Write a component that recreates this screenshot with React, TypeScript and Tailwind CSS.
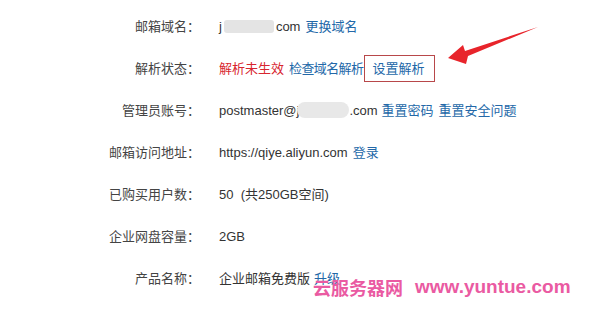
import React from "react";

const font = { fontFamily: '"Liberation Sans", "Noto Sans CJK SC", sans-serif' };

function Row({ label, children }: { label: string; children: React.ReactNode }) {
  return (
    <div className="flex h-[42px] items-center">
      <div className="w-[200px] shrink-0 text-right text-[#444]">{label}</div>
      <div className="ml-[19px] flex items-center whitespace-nowrap text-[#333]">{children}</div>
    </div>
  );
}

const Link = ({ children, className = "" }: { children: React.ReactNode; className?: string }) => (
  <span className={`text-[#2368a8] ${className}`}>{children}</span>
);

export default function App() {
  return (
    <div className="relative h-[323px] w-[600px] overflow-hidden bg-white text-[13px] leading-none" style={font}>
      <div className="flex flex-col pt-[5px]">
        <Row label="邮箱域名：">
          <span>j</span>
          <span className="mx-[2px] inline-block h-[13px] w-[50px] rounded-[3px] bg-[#e4e4e4]" />
          <span>com</span>
          <Link className="ml-[5px]">更换域名</Link>
        </Row>
        <Row label="解析状态：">
          <span className="text-[#d8262f]">解析未生效</span>
          <Link className="ml-[5px] tracking-[-0.6px]">检查域名解析</Link>
          <span className="ml-[1px] flex h-[27px] w-[71px] items-center border border-[#b8484a] pl-[7px]">
            <Link>设置解析</Link>
          </span>
        </Row>
        <Row label="管理员账号：">
          <span>postmaster@j</span>
          <span className="-ml-[2px] inline-block h-[16px] w-[52px] rounded-[8px] bg-[#e8e8e8]" />
          <span>.com</span>
          <Link className="ml-[4px]">重置密码</Link>
          <Link className="ml-[5px]">重置安全问题</Link>
        </Row>
        <Row label="邮箱访问地址：">
          <span>https://qiye.aliyun.com</span>
          <Link className="ml-[5px]">登录</Link>
        </Row>
        <Row label="已购买用户数：">
          <span>50 &nbsp;(共250GB空间)</span>
        </Row>
        <Row label="企业网盘容量：">
          <span>2GB</span>
        </Row>
        <Row label="产品名称：">
          <span>企业邮箱免费版</span>
          <Link className="ml-[4px]">升级</Link>
        </Row>
      </div>

      <svg className="absolute left-0 top-0" width="600" height="323" viewBox="0 0 600 323">
        <polygon points="448,58 463,45 465,51 538,27 468,56 466,64" fill="#e8242b" />
      </svg>

      <div
        className="absolute left-[313px] top-[277px] flex items-center whitespace-nowrap text-[18px] font-bold leading-none text-[#ea5aa2]"
        style={{ fontFamily: '"Noto Sans CJK SC", sans-serif' }}
      >
        <span>云服务器网</span>
        <span className="ml-[12px] text-[19px]" style={{ fontFamily: '"Liberation Sans", sans-serif' }}>
          www.yuntue.com
        </span>
      </div>
    </div>
  );
}
